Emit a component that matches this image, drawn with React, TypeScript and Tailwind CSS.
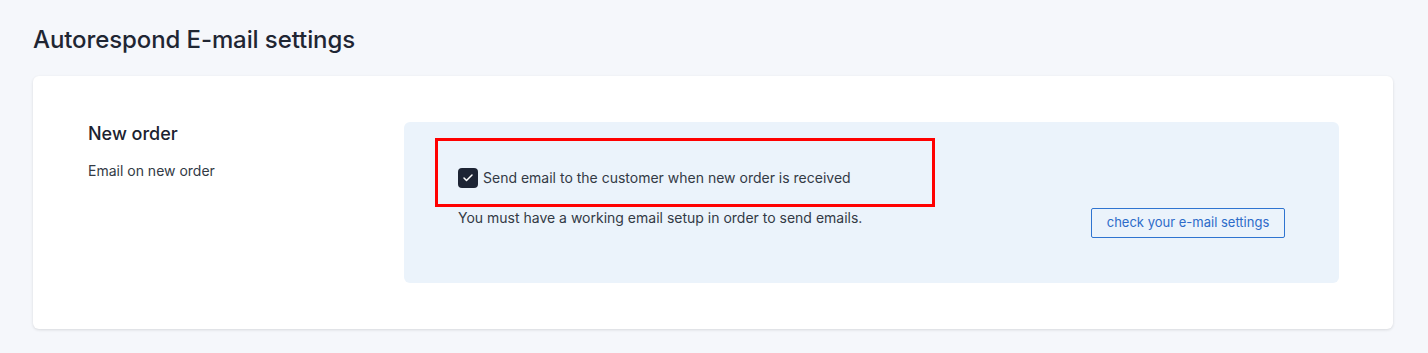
import React, { useState } from 'react';
import { Check } from 'lucide-react';

export default function App() {
  const [notify, setNotify] = useState(true);

  return (
    <div className="min-h-[353px] bg-[#f5f7fb] pl-[33px] pr-[35px] pt-[24px] pb-[24px] font-['Inter',sans-serif] text-[#1f2633]">
      <h1 className="text-[24px] leading-[32px] font-medium tracking-[-0.1px]">Autorespond E-mail settings</h1>

      {/* Settings card */}
      <div className="mt-[20px] rounded-md bg-white pl-[55px] pr-[54px] pt-[46px] pb-[46px] shadow-[0_1px_3px_rgba(0,0,0,0.12)]">
        <div className="flex">
          <div className="w-[316px] shrink-0">
            <h2 className="text-[18px] leading-[24px] font-medium text-[#1c2230]">New order</h2>
            <p className="mt-[15px] text-[14px] leading-[20px] text-[#333a45]">Email on new order</p>
          </div>

          <div className="flex h-[161px] flex-1 justify-between rounded-md bg-[#ebf3fb] pl-[31px] pr-[54px] pt-[16px]">
            <div>
              <div className="flex h-[69px] w-[500px] items-start border-[3px] border-[#ff0000] pl-[20px] pt-[27px]">
                <label className="flex cursor-pointer items-center gap-[5px]">
                  <button
                    type="button"
                    onClick={() => setNotify(!notify)}
                    className="flex h-[20px] w-[20px] items-center justify-center rounded-[4px] bg-[#1d2434]"
                  >
                    {notify && <Check className="h-[12px] w-[12px] text-white" strokeWidth={3} />}
                  </button>
                  <span className="text-[14px] leading-[20px] text-[#333a45]">Send email to the customer when new order is received</span>
                </label>
              </div>
              <p className="mt-[1px] pl-[23px] text-[14px] leading-[20px] text-[#333a45]">
                You must have a working email setup in order to send emails.
              </p>
            </div>

            <div className="pt-[70px]">
              <button
                type="button"
                className="h-[30px] w-[194px] rounded-[2px] border border-[#2f74d0] text-[13px] text-[#2d6bc9]"
              >
                check your e-mail settings
              </button>
            </div>
          </div>
        </div>
      </div>
    </div>
  );
}
